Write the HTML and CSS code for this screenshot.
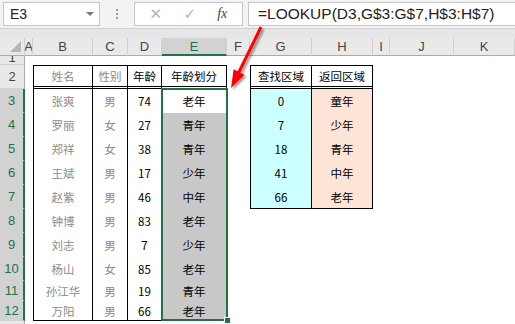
FILE: index.html
```html
<!DOCTYPE html>
<html lang="zh">
<head>
<meta charset="utf-8">
<link rel="stylesheet" href="styles.css">
</head>
<body>
<div class="fbar">
  <div class="namebox"><span class="ref">E3</span><span class="caret"></span></div>
  <div class="grip"><i></i><i></i><i></i></div>
  <div class="btns"><span class="x">✕</span><span class="ok">✓</span><span class="fx">fx</span></div>
  <div class="formula">=LOOKUP(D3,G$3:G$7,H$3:H$7)</div>
</div>
<div class="band"></div>
<div class="sheet">
  <div class="corner"></div><div class="ch">A</div><div class="ch">B</div><div class="ch">C</div><div class="ch">D</div><div class="ch sel">E</div><div class="ch">F</div><div class="ch">G</div><div class="ch">H</div><div class="ch">I</div><div class="ch">J</div><div class="ch">K</div>

  <div class="rh r1"><span>1</span></div><div></div><div></div><div></div><div></div><div></div><div></div><div></div><div></div><div></div><div></div><div></div>

  <div class="rh">2</div><div></div><div class="t th l g">姓名</div><div class="t th g">性别</div><div class="t th">年龄</div><div class="t th">年龄划分</div><div></div><div class="t th l">查找区域</div><div class="t th">返回区域</div><div></div><div></div><div></div>

  <div class="rh sel">3</div><div></div><div class="t l g">张爽</div><div class="t g">男</div><div class="t">74</div><div class="t e3">老年<div class="selbox"><span class="handle"></span></div></div><div></div><div class="t l cy">0</div><div class="t pe">童年</div><div></div><div></div><div></div>

  <div class="rh sel">4</div><div></div><div class="t l g">罗丽</div><div class="t g">女</div><div class="t">27</div><div class="t sh">青年</div><div></div><div class="t l cy">7</div><div class="t pe">少年</div><div></div><div></div><div></div>

  <div class="rh sel">5</div><div></div><div class="t l g">郑祥</div><div class="t g">女</div><div class="t">38</div><div class="t sh">青年</div><div></div><div class="t l cy">18</div><div class="t pe">青年</div><div></div><div></div><div></div>

  <div class="rh sel">6</div><div></div><div class="t l g">王斌</div><div class="t g">男</div><div class="t">17</div><div class="t sh">少年</div><div></div><div class="t l cy">41</div><div class="t pe">中年</div><div></div><div></div><div></div>

  <div class="rh sel">7</div><div></div><div class="t l g">赵紫</div><div class="t g">男</div><div class="t">46</div><div class="t sh">中年</div><div></div><div class="t l cy last">66</div><div class="t pe last">老年</div><div></div><div></div><div></div>

  <div class="rh sel">8</div><div></div><div class="t l g">钟博</div><div class="t g">男</div><div class="t">83</div><div class="t sh">老年</div><div></div><div></div><div></div><div></div><div></div><div></div>

  <div class="rh sel">9</div><div></div><div class="t l g">刘志</div><div class="t g">男</div><div class="t">7</div><div class="t sh">少年</div><div></div><div></div><div></div><div></div><div></div><div></div>

  <div class="rh sel">10</div><div></div><div class="t l g">杨山</div><div class="t g">女</div><div class="t">85</div><div class="t sh">老年</div><div></div><div></div><div></div><div></div><div></div><div></div>

  <div class="rh sel">11</div><div></div><div class="t l g">孙江华</div><div class="t g">男</div><div class="t">19</div><div class="t sh">青年</div><div></div><div></div><div></div><div></div><div></div><div></div>

  <div class="rh sel">12</div><div></div><div class="t l g last">万阳</div><div class="t g last">男</div><div class="t last">66</div><div class="t sh last">老年</div><div></div><div></div><div></div><div></div><div></div><div></div>

  <div class="rh"></div>
</div>
<svg class="arrow" width="515" height="324" viewBox="0 0 515 324">
  <defs>
    <filter id="sh" x="-50%" y="-50%" width="200%" height="200%">
      <feDropShadow dx="2" dy="2" stdDeviation="1.2" flood-color="#000" flood-opacity="0.4"/>
    </filter>
  </defs>
  <g filter="url(#sh)">
    <line x1="261" y1="27" x2="238" y2="74" stroke="#ff0000" stroke-width="3"/>
    <polygon points="231,88 233.6,69.3 244.4,74.7" fill="#ff0000"/>
  </g>
</svg>
</body>
</html>
```
FILE: styles.css
```css
* { box-sizing: border-box; margin: 0; padding: 0; }
body {
  width: 515px; height: 324px; overflow: hidden; background: #fff;
  font-family: "Liberation Sans", Arial, sans-serif; position: relative;
}
.fbar {
  height: 28px; background: #f3f3f3; display: flex; align-items: flex-start;
  padding: 2px 0 0 3px;
}
.namebox {
  width: 97px; height: 24px; background: #fff; border: 1px solid #c6c6c6;
  display: flex; align-items: center; justify-content: space-between;
  padding: 0 5px 0 6px; font-size: 14px; color: #222;
}
.caret {
  width: 0; height: 0; border-left: 4px solid transparent; border-right: 4px solid transparent;
  border-top: 4px solid #777;
}
.grip { width: 34px; display: flex; flex-direction: column; align-items: center; gap: 2px; padding-top: 7px; }
.grip i { width: 2px; height: 2px; background: #9a9a9a; display: block; }
.btns {
  width: 109px; height: 24px; background: #fff; border: 1px solid #c6c6c6;
  display: flex; align-items: center; justify-content: space-around; padding: 0 4px;
}
.x, .ok { color: #b4b4b4; font-size: 15px; font-family: "DejaVu Sans", sans-serif; }
.fx { font-family: "Liberation Serif", serif; font-style: italic; font-size: 14px; color: #444; }
.formula {
  margin-left: 5px; flex: 1; height: 24px; background: #fff; border: 1px solid #c6c6c6; border-right: none;
  padding-left: 9px; font-size: 15.5px; line-height: 22px; color: #222; white-space: nowrap;
}
.band { height: 10px; background: #e6e6e6; border-top: 1px solid #d0d0d0; }
.sheet {
  display: grid;
  grid-template-columns: 25px 8px 60px 35px 34px 65px 23px 62px 61px 17px 64px 61px;
  grid-template-rows: 18px 9px repeat(9, 24px) 20px 20px 10px;
}
.corner, .ch, .rh { background: #e9e9e9; color: #444; font-size: 13px; overflow: hidden; }
.corner { border-right: 1px solid #d0d0d0; border-bottom: 1px solid #ababab; position: relative; }
.corner::after {
  content: ""; position: absolute; right: 3px; bottom: 3px; width: 0; height: 0;
  border-left: 11px solid transparent; border-bottom: 11px solid #b7b7b7;
}
.ch {
  border-right: 1px solid #d0d0d0; border-bottom: 1px solid #ababab;
  display: flex; align-items: center; justify-content: center;
}
.ch.sel { background: #d2d2d2; color: #217346; border-bottom: 2px solid #217346; }
.rh {
  border-bottom: 1px solid #d0d0d0; border-right: 1px solid #ababab;
  display: flex; align-items: center; justify-content: center;
}
.rh.r1 { align-items: flex-end; }
.rh.r1 span { line-height: 12px; display: block; }
.rh.sel { background: #d2d2d2; color: #217346; border-right: 2px solid #217346; }
.t {
  font-family: "Noto Sans CJK SC", sans-serif; font-size: 11.5px; color: #000;
  display: flex; align-items: center; justify-content: center;
  border-right: 1px solid #000; white-space: nowrap;
}
.l { border-left: 1px solid #000; }
.th { border-top: 1px solid #000; border-bottom: 3px double #000; }
.last { border-bottom: 1px solid #000; }
.g { color: #8a8a8a; }
.sh { background: #c8c8c8; }
.cy { background: #ccffff; }
.pe { background: #fce4d6; }
.e3 { position: relative; }
.selbox {
  position: absolute; left: -1px; top: -1px; width: 67px; height: 233px;
  border: 2px solid #217346; z-index: 2;
}
.handle {
  position: absolute; right: -5px; bottom: -5px; width: 7px; height: 7px;
  background: #217346; border: 1px solid #fff;
}
.arrow { position: absolute; left: 0; top: 0; pointer-events: none; }
```
